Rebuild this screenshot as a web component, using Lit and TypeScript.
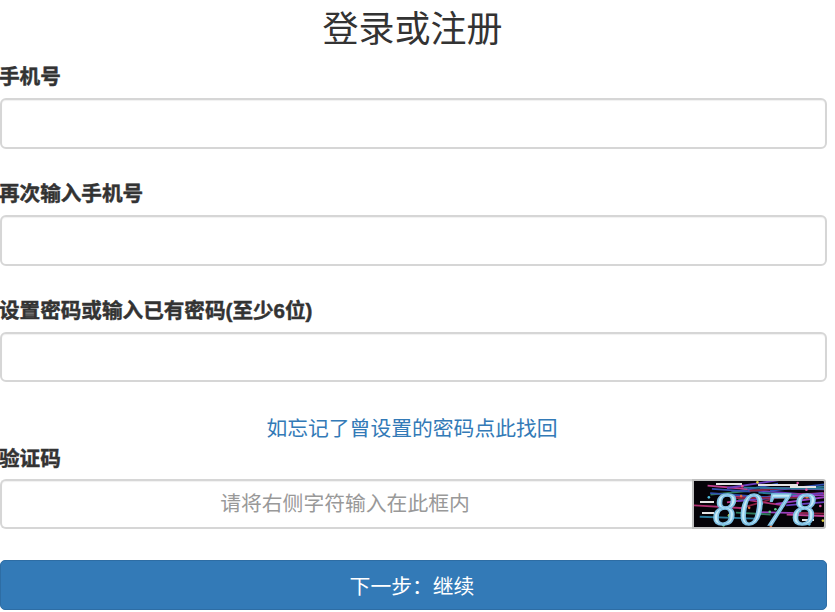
import { LitElement, html, css, svg } from "lit";
import { customElement } from "lit/decorators.js";

const colors = ["#6a3fc0", "#2a7a9a", "#b03070", "#3050b0", "#8a2040", "#9a40c0", "#2f7f5f", "#c04090"];
const pseudo = (n: number) => {
  const v = Math.sin(n * 12.9898) * 43758.5453;
  return v - Math.floor(v);
};
const noise = Array.from({ length: 30 }, (_, i) => {
  const x1 = pseudo(i + 1) * 100;
  const y1 = 4 + pseudo(i + 40) * 34;
  const x2 = x1 + 30 + pseudo(i + 80) * 60;
  const y2 = y1 + (pseudo(i + 120) - 0.65) * 16;
  return { d: `M${x1} ${y1} L${x2} ${y2}`, c: colors[i % colors.length] };
});
const dots = Array.from({ length: 22 }, (_, i) => ({
  x: pseudo(i + 200) * 130,
  y: pseudo(i + 240) * 46,
  c: ["#5fd08a", "#e0d040", "#50c0e0", "#e050a0", "#e07040"][i % 5],
}));
const whiteBars: [number, number, number][] = [
  [22, 2, 26], [64, 3, 40], [6, 20, 14], [8, 31, 12], [96, 5, 26], [108, 38, 12],
];

@customElement("app-root")
export class AppRoot extends LitElement {
  static styles = css`
    :host {
      display: block;
      width: 827px;
      font-family: "Liberation Sans", "Noto Sans CJK SC", sans-serif;
      color: #333;
    }
    h1 {
      margin: 0;
      padding: 6px 2px 0 0;
      height: 62px;
      box-sizing: border-box;
      font-size: 36px;
      line-height: 47px;
      font-weight: 400;
      text-align: center;
    }
    label {
      display: block;
      font-size: 20.6px;
      line-height: 30px;
      font-weight: 700;
      margin: 0 0 6px -1px;
      -webkit-text-stroke: 0.45px #333;
    }
    .group {
      margin-bottom: 30px;
    }
    .input {
      box-sizing: border-box;
      height: 51px;
      border: 2px solid #d6d6d6;
      border-radius: 6px;
      background: #fff;
      box-shadow: inset 0 1px 1px rgba(0, 0, 0, 0.06);
    }
    .group.third {
      margin-bottom: 32px;
    }
    .group.third .input {
      height: 50px;
    }
    .link {
      display: block;
      padding-right: 3px;
      text-align: center;
      font-size: 20.8px;
      line-height: 30px;
      color: #337ab7;
      text-decoration: none;
    }
    label.captcha-label {
      margin-bottom: 5px;
    }
    .captcha-row {
      display: flex;
      height: 50px;
      margin: 0 1px 31px 0;
    }
    .captcha-input {
      flex: 1;
      box-sizing: border-box;
      border: 2px solid #d6d6d6;
      border-right: none;
      border-radius: 6px 0 0 6px;
      box-shadow: inset 0 1px 1px rgba(0, 0, 0, 0.06);
      font-size: 20.8px;
      line-height: 46px;
      color: #999;
      text-align: center;
      padding-right: 4px;
    }
    .captcha-img {
      position: relative;
      flex: none;
      width: 134px;
      height: 50px;
      box-sizing: border-box;
      border: 2px solid #c0c0c0;
      border-radius: 0 3px 3px 0;
      background: #050308;
    }
    .captcha-img svg {
      display: block;
      filter: blur(0.6px);
    }
    .digits {
      position: absolute;
      left: 19px;
      top: 6px;
      font-family: "Liberation Serif", serif;
      font-style: italic;
      font-size: 46px;
      line-height: 46px;
      letter-spacing: 3.5px;
      white-space: nowrap;
      color: #c6eaf7;
      -webkit-text-stroke: 1.6px #7fc0e4;
      filter: blur(0.5px);
    }
    button {
      display: block;
      width: 100%;
      height: 50px;
      box-sizing: border-box;
      border: 1px solid #2e6da4;
      border-radius: 5px;
      background: #337ab7;
      color: #fff;
      font: inherit;
      font-size: 20.8px;
      padding: 0 3px 0 0;
    }
  `;

  render() {
    return html`
      <h1>登录或注册</h1>
      <div class="group">
        <label>手机号</label>
        <div class="input"></div>
      </div>
      <div class="group">
        <label>再次输入手机号</label>
        <div class="input"></div>
      </div>
      <div class="group third">
        <label>设置密码或输入已有密码(至少6位)</label>
        <div class="input"></div>
      </div>
      <a class="link" href="#">如忘记了曾设置的密码点此找回</a>
      <label class="captcha-label">验证码</label>
      <div class="captcha-row">
        <div class="captcha-input">请将右侧字符输入在此框内</div>
        <div class="captcha-img">
          <svg width="130" height="46" viewBox="0 0 130 46">
            <g fill="none" stroke-width="1.8">
              ${noise.map((n) => svg`<path d=${n.d} stroke=${n.c}></path>`)}
            </g>
            ${whiteBars.map(([x, y, w]) => svg`<rect x=${x} y=${y} width=${w} height="2" fill="#e4e4e4"></rect>`)}
            ${dots.map((p) => svg`<circle cx=${p.x} cy=${p.y} r="1.3" fill=${p.c}></circle>`)}
          </svg>
          <span class="digits">8078</span>
        </div>
      </div>
      <button>下一步：继续</button>
    `;
  }
}
